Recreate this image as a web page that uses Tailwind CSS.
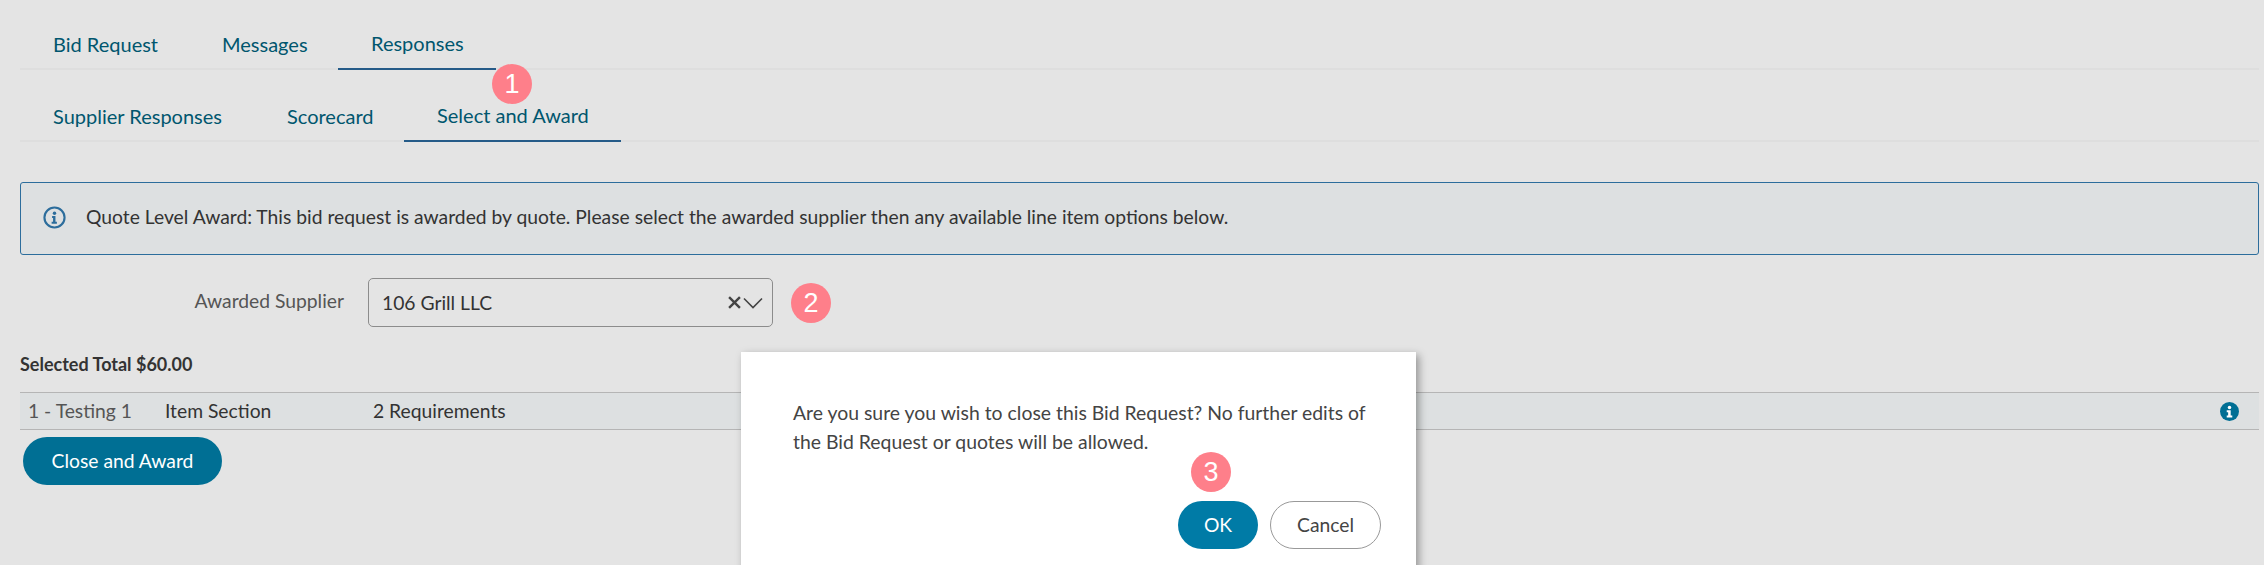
<!DOCTYPE html>
<html lang="en">
<head>
    <meta charset="UTF-8">
    <title>Select and Award</title>
    <script src="https://cdn.jsdelivr.net/npm/@tailwindcss/browser@4"></script>
</head>
<body class="bg-[#e4e4e4] font-['Lato',sans-serif] text-[19.3px] text-[#333]">
    <div class="relative h-[565px] overflow-hidden pl-[20px] pr-[5px]">
        <!-- Tabs -->
        <div class="flex h-[70px] border-b-2 border-[#dedede] text-[20px] text-[#00566e]">
            <a class="flex h-[70px] w-[169px] items-center pt-[18px] pl-[33px]">Bid Request</a>
            <a class="flex h-[70px] w-[149px] items-center pt-[18px] pl-[33px]">Messages</a>
            <a class="flex h-[70px] w-[158px] items-center border-b-2 border-[#255b88] pt-[18px] pl-[33px]">Responses</a>
        </div>
        <div class="flex h-[72px] border-b-2 border-[#dedede] text-[20px] text-[#00566e]">
            <a class="flex h-[72px] w-[234px] items-center pt-[20px] pl-[33px]">Supplier Responses</a>
            <a class="flex h-[72px] w-[150px] items-center pt-[20px] pl-[33px]">Scorecard</a>
            <a class="flex h-[72px] w-[217px] items-center border-b-2 border-[#255b88] pt-[20px] pl-[33px]">Select and Award</a>
        </div>

        <!-- Info banner -->
        <div class="mt-[40px] flex h-[73px] items-center rounded-[3px] border border-[#2c6d9c] bg-[#dde0e1] pb-[2px] pl-[22px]">
            <svg class="h-[23px] w-[23px]" viewBox="0 0 24 24" fill="none">
                <circle cx="12" cy="12" r="10.5" stroke="#2c6d9c" stroke-width="2.2"/>
                <circle cx="12" cy="7.5" r="1.8" fill="#2c6d9c"/>
                <path d="M9.5 10.5h3.5v6h1.5v2h-5.5v-2H10.5v-4h-1z" fill="#2c6d9c"/>
            </svg>
            <span class="ml-[20px]">Quote Level Award: This bid request is awarded by quote. Please select the awarded supplier then any available line item options below.</span>
        </div>

        <!-- Supplier select -->
        <div class="mt-[23px] flex items-center">
            <label class="w-[324px] pb-[3px] text-right text-[#555]">Awarded Supplier</label>
            <div class="ml-[24px] flex h-[49px] w-[405px] items-center rounded-[5px] border border-[#8c8c8c] pl-[13px] pr-[9px]">
                <span class="flex-1 pt-[2px]">106 Grill LLC</span>
                <svg class="h-[13px] w-[13px]" viewBox="0 0 12 12" fill="none" stroke="#444" stroke-width="2.2">
                    <path d="M1 1l10 10M11 1L1 11"/>
                </svg>
                <svg class="ml-[2px] h-[12px] w-[20px]" viewBox="0 0 20 12" fill="none" stroke="#444" stroke-width="1.6">
                    <path d="M1 1.5l9 9 9-9"/>
                </svg>
            </div>
        </div>

        <p class="mt-[25px] text-[18px] font-bold leading-[24px]">Selected Total $60.00</p>

        <!-- Line item row -->
        <div class="mt-[16px] flex h-[38px] items-center border-y border-[#b5b5b5] bg-[#dde0e1] pl-[8px] pr-[20px]">
            <span class="w-[137px] text-[#555]">1 - Testing 1</span>
            <span class="w-[208px]">Item Section</span>
            <span class="flex-1">2 Requirements</span>
            <svg class="h-[19px] w-[19px]" viewBox="0 0 24 24">
                <circle cx="12" cy="12" r="12" fill="#006f94"/>
                <circle cx="12" cy="7" r="2.2" fill="#fff"/>
                <path d="M8.5 10.5h5v6.5h2v2.5h-7V17h1.8v-4H8.5z" fill="#fff"/>
            </svg>
        </div>

        <button class="mt-[7px] ml-[3px] h-[48px] w-[199px] rounded-[24px] bg-[#006f94] text-white">Close and Award</button>

        <!-- Confirm dialog -->
        <div class="absolute left-[741px] top-[352px] h-[240px] w-[675px] bg-white pl-[52px] pr-[40px] pt-[46px] shadow-[3px_3px_8px_rgba(0,0,0,0.35)]">
            <p class="text-[19.4px] leading-[29px] text-[#444]">Are you sure you wish to close this Bid Request? No further edits of the Bid Request or quotes will be allowed.</p>
            <div class="absolute left-[437px] top-[149px] flex gap-[12px]">
                <button class="h-[48px] w-[80px] rounded-[24px] bg-[#007ba6] text-white">OK</button>
                <button class="h-[48px] w-[111px] rounded-[24px] border border-[#999] bg-white text-[#444]">Cancel</button>
            </div>
        </div>

        <!-- Step badges -->
        <div class="absolute left-[492px] top-[64px] flex h-[40px] w-[40px] items-center justify-center rounded-full bg-[#fe7f8a] font-['Liberation_Sans',sans-serif] text-[27px] text-white">1</div>
        <div class="absolute left-[791px] top-[283px] flex h-[40px] w-[40px] items-center justify-center rounded-full bg-[#fe7f8a] font-['Liberation_Sans',sans-serif] text-[27px] text-white">2</div>
        <div class="absolute left-[1191px] top-[452px] flex h-[40px] w-[40px] items-center justify-center rounded-full bg-[#fe7f8a] font-['Liberation_Sans',sans-serif] text-[27px] text-white">3</div>
    </div>
</body>
</html>
